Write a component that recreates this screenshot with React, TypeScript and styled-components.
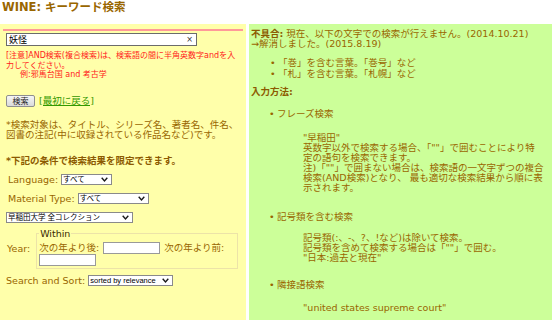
import styled, { createGlobalStyle } from 'styled-components';

const GlobalStyle = createGlobalStyle`
  html, body {
    margin: 0;
    padding: 0;
    background: #fff;
  }
  body {
    font-family: 'DejaVu Sans', 'Noto Sans CJK JP', sans-serif;
    color: #996600;
  }
`;

const brown = '#996600';

type DropdownProps = {
  width: number;
  value: string;
  options: string[];
};

function Dropdown({ width, value, options }: DropdownProps) {
  return (
    <SelectFrame $width={width}>
      <SelectControl defaultValue={value}>
        {options.map((o) => (
          <option key={o}>{o}</option>
        ))}
      </SelectControl>
      <svg width="7" height="5" viewBox="0 0 7 5">
        <path d="M0.7 0.8 L3.5 3.9 L6.3 0.8" fill="none" stroke="#1a1a1a" strokeWidth="1.4" />
      </svg>
    </SelectFrame>
  );
}

export default function App() {
  return (
    <Page>
      <GlobalStyle />
      <Title>WINE: キーワード検索</Title>
      <Columns>
        <SearchPanel>
          <SearchForm onSubmit={(e) => e.preventDefault()}>
            <QueryBox>
              <QueryInput defaultValue="妖怪" />
              <ClearMark>×</ClearMark>
            </QueryBox>
            <Notice>
              [注意]AND検索(複合検索)は、検索語の間に半角英数字andを入
              <br />
              力してください。
              <Example>例:邪馬台国 and 考古学</Example>
            </Notice>
            <ButtonRow>
              <SearchButton type="submit">検索</SearchButton>
              <ResetLink href="#">[最初に戻る]</ResetLink>
            </ButtonRow>
            <Hint>
              *検索対象は、タイトル、シリーズ名、著者名、件名、
              <br />
              図書の注記(中に収録されている作品名など)です。
            </Hint>
            <LimitHeading>*下記の条件で検索結果を限定できます。</LimitHeading>
            <FilterRow $top={7} $indent={2}>
              <FilterLabel>Language:</FilterLabel>
              <Dropdown width={51} value="すべて" options={['すべて', '日本語', '英語']} />
            </FilterRow>
            <FilterRow $top={5} $indent={2}>
              <FilterLabel>Material Type:</FilterLabel>
              <Dropdown width={71} value="すべて" options={['すべて', '図書', '雑誌']} />
            </FilterRow>
            <FilterRow $top={5} $indent={0}>
              <Dropdown
                width={127}
                value="早稲田大学 全コレクション"
                options={['早稲田大学 全コレクション']}
              />
            </FilterRow>
            <FilterRow $top={4} $indent={1}>
              <FilterLabel>Year:</FilterLabel>
              <YearBox>
                <legend>Within</legend>
                <YearText>次の年より後:</YearText>
                <YearInput />
                <YearText>次の年より前:</YearText>
                <YearInput />
              </YearBox>
            </FilterRow>
            <FilterRow $top={5} $indent={0}>
              <FilterLabel>Search and Sort:</FilterLabel>
              <Dropdown
                width={85}
                value="sorted by relevance"
                options={['sorted by relevance', 'sorted by date']}
              />
            </FilterRow>
          </SearchForm>
        </SearchPanel>

        <HelpPanel>
          <HelpLine>
            <b>不具合:</b> 現在、以下の文字での検索が行えません。(2014.10.21)
          </HelpLine>
          <HelpLine>→解消しました。(2015.8.19)</HelpLine>
          <IssueList>
            <Bullet $lh={11}>「巻」を含む言葉。「巻号」など</Bullet>
            <Bullet $lh={11}>「札」を含む言葉。「札幌」など</Bullet>
          </IssueList>
          <HelpHeading>入力方法:</HelpHeading>
          <MethodList>
            <Bullet $lh={10}>
              フレーズ検索
              <Detail $before={14} $after={19}>
                "早稲田"
                <br />
                英数字以外で検索する場合、「""」で囲むことにより特
                <br />
                定の語句を検索できます。
                <br />
                注)「""」で囲まない場合は、検索語の一文字ずつの複合
                <br />
                検索(AND検索)となり、 最も適切な検索結果から順に表
                <br />
                示されます。
              </Detail>
            </Bullet>
            <Bullet $lh={10}>
              記号類を含む検索
              <Detail $before={11} $after={17}>
                記号類(:、-、?、!など)は除いて検索。
                <br />
                記号類を含めて検索する場合は「""」で囲む。
                <br />
                "日本:過去と現在"
              </Detail>
            </Bullet>
            <Bullet $lh={10}>
              隣接語検索
              <Detail $before={13} $after={0}>
                "united states supreme court"
              </Detail>
            </Bullet>
          </MethodList>
        </HelpPanel>
      </Columns>
    </Page>
  );
}

const Page = styled.div`
  width: 552px;
  height: 320px;
  overflow: hidden;
  display: flex;
  flex-direction: column;
`;

const Title = styled.h1`
  margin: 0;
  padding: 0 2px;
  height: 24px;
  font-size: 11.5px;
  line-height: 14px;
  font-weight: bold;
  color: ${brown};
`;

const Columns = styled.div`
  flex: 1;
  display: grid;
  grid-template-columns: 246px 1fr;
  column-gap: 3px;
`;

const SearchPanel = styled.div`
  background: #ffffaa;
  padding: 5px 3px 0;
  font-size: 9.5px;
  line-height: 10px;
  white-space: nowrap;
`;

const SearchForm = styled.form`
  border-top: 2px solid #ff9999;
  padding: 2px 3px 0;
`;

const QueryBox = styled.div`
  display: flex;
  align-items: center;
  box-sizing: border-box;
  width: 191px;
  height: 13px;
  border: 1px solid #6b6b6b;
  background: #fff;
`;

const QueryInput = styled.input`
  flex: 1;
  min-width: 0;
  height: 11px;
  padding: 0 2px;
  border: none;
  outline: none;
  background: transparent;
  font: 9px 'DejaVu Sans', 'Noto Sans CJK JP', sans-serif;
  color: #000;
`;

const ClearMark = styled.span`
  padding-right: 3px;
  font-size: 8px;
  line-height: 11px;
  color: #333;
`;

const Notice = styled.p`
  margin: 5px 0 0;
  color: #ff1a1a;
  font-size: 8px;
  line-height: 9.5px;
`;

const Example = styled.span`
  display: block;
  padding-left: 14px;
`;

const ButtonRow = styled.div`
  display: flex;
  align-items: center;
  gap: 4px;
  margin-top: 15px;
  height: 12px;
`;

const SearchButton = styled.button`
  box-sizing: border-box;
  width: 29px;
  height: 12px;
  padding: 0;
  border: 1px solid #8f8f8f;
  border-radius: 2px;
  background: linear-gradient(#f6f6f6, #dadada);
  font: 8px 'Noto Sans CJK JP', sans-serif;
  line-height: 10px;
  color: #222;
`;

const ResetLink = styled.a`
  color: #339900;
  text-decoration: underline;
  font-size: 9.5px;
`;

const Hint = styled.p`
  margin: 13px 0 0;
`;

const LimitHeading = styled.p`
  margin: 16px 0 0;
  font-weight: bold;
  color: #8c5a00;
`;

const FilterRow = styled.div<{ $top: number; $indent: number }>`
  display: flex;
  align-items: center;
  gap: 2px;
  margin-top: ${(p) => p.$top}px;
  padding-left: ${(p) => p.$indent}px;
  min-height: 14px;
`;

const FilterLabel = styled.span`
  margin-right: 1px;
`;

const SelectFrame = styled.span<{ $width: number }>`
  display: inline-flex;
  align-items: center;
  box-sizing: border-box;
  width: ${(p) => p.$width}px;
  height: 11px;
  padding-right: 3px;
  border: 1px solid #8a8a8a;
  background: #fff;
`;

const SelectControl = styled.select`
  appearance: none;
  flex: 1;
  min-width: 0;
  height: 9px;
  padding: 0 1px;
  border: none;
  outline: none;
  background: transparent;
  font: 7.5px 'Liberation Sans', 'Noto Sans CJK JP', sans-serif;
  line-height: 9px;
  color: #000;
`;

const YearBox = styled.fieldset`
  display: flex;
  flex-wrap: wrap;
  align-items: center;
  column-gap: 4px;
  row-gap: 0;
  box-sizing: border-box;
  width: 202px;
  margin: 0 0 0 3px;
  padding: 3px 2px 2px;
  border: 1px solid #ece3a8;

  legend {
    padding: 0 1px;
    font-size: 9.5px;
    line-height: 10px;
    color: #3a2a00;
  }
`;

const YearText = styled.span``;

const YearInput = styled.input`
  box-sizing: border-box;
  width: 57px;
  height: 12px;
  border: 1px solid #999;
  background: #fff;
  padding: 0;
`;

const HelpPanel = styled.div`
  background: #ccff99;
  padding: 5px 0 0 2px;
  font-size: 9.5px;
  line-height: 10px;
  white-space: nowrap;
`;

const HelpLine = styled.p`
  margin: 0;
  b {
    color: #8c5a00;
  }
`;

const IssueList = styled.ul`
  margin: 7.5px 0 0;
  padding-left: 28px;
`;

const Bullet = styled.li<{ $lh: number }>`
  list-style: none;
  line-height: ${(p) => p.$lh}px;

  &::before {
    content: '•';
    display: inline-block;
    width: 8px;
    margin-left: -9px;
    font-family: 'DejaVu Sans', sans-serif;
  }
`;

const HelpHeading = styled.p`
  margin: 8.5px 0 0;
  font-weight: bold;
  color: #8c5a00;
`;

const MethodList = styled.ul`
  margin: 12px 0 0;
  padding-left: 27px;
`;

const Detail = styled.div<{ $before: number; $after: number }>`
  margin: ${(p) => p.$before}px 0 ${(p) => p.$after}px 25px;
`;
